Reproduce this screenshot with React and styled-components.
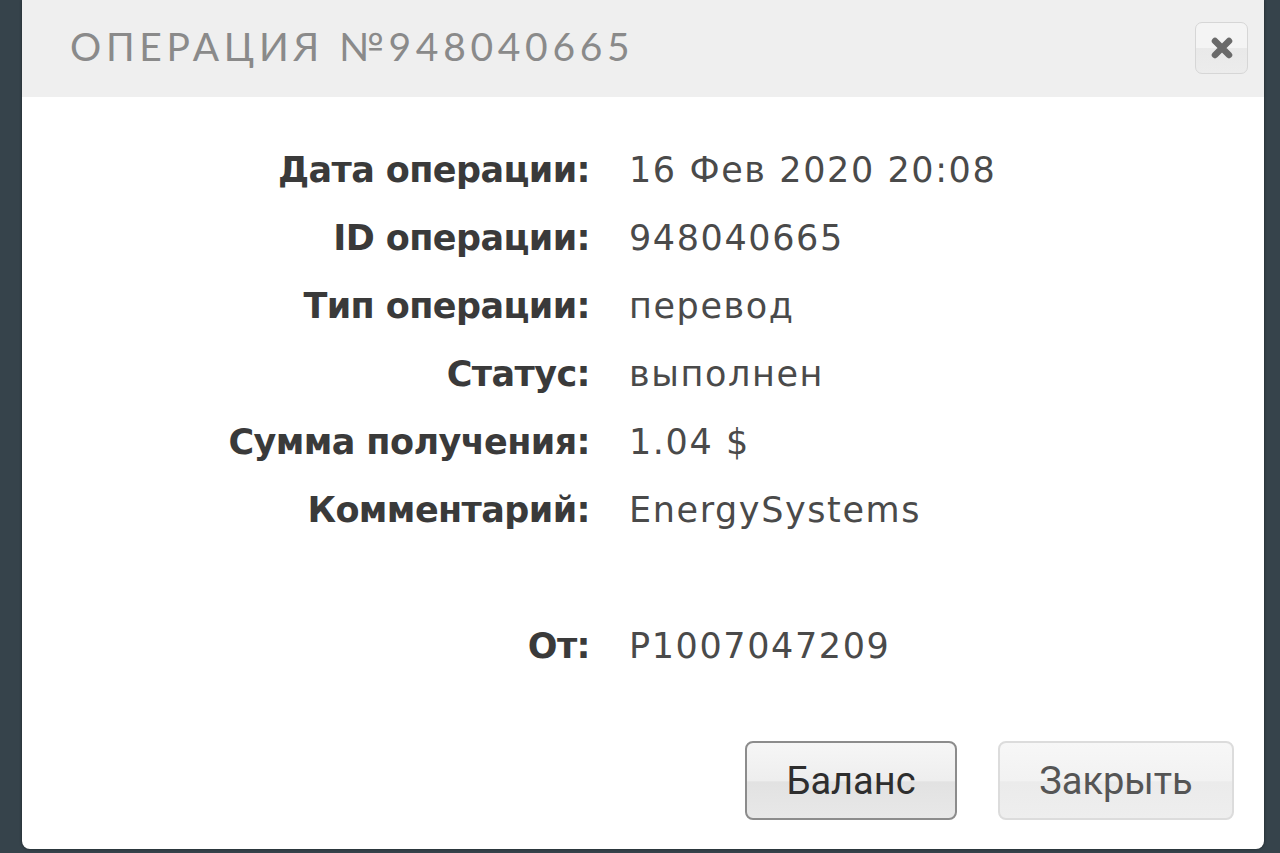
import React from "react";
import styled, { createGlobalStyle } from "styled-components";

const Global = createGlobalStyle`
  html, body { margin: 0; padding: 0; background: #36434b; }
  body { width: 1280px; height: 853px; overflow: hidden; }
`;

const Page = styled.div`
  width: 1280px;
  height: 853px;
  padding: 0 16px 0 22px;
  box-sizing: border-box;
  background: #36434b;
`;

const Dialog = styled.div`
  width: 1242px;
  height: 849px;
  background: #ffffff;
  border-radius: 0 0 8px 8px;
  box-shadow: 0 0 3px rgba(0, 0, 0, 0.5);
  display: flex;
  flex-direction: column;
  overflow: hidden;
`;

const Header = styled.div`
  height: 97px;
  background: #efefef;
  display: flex;
  align-items: center;
  justify-content: space-between;
  padding: 0 16px 0 48px;
  box-sizing: border-box;
  flex-shrink: 0;
`;

const Title = styled.h1`
  margin: 0 0 6px 0;
  font-family: "Lato", "DejaVu Sans", sans-serif;
  font-weight: 400;
  font-size: 39px;
  letter-spacing: 4.7px;
  color: #8a8a8a;
  text-transform: uppercase;
`;

const CloseBtn = styled.button`
  width: 53px;
  height: 52px;
  margin-bottom: 2px;
  border: 1px solid #d6d6d6;
  border-radius: 7px;
  background: linear-gradient(#f4f4f4 0%, #f4f4f4 50%, #e9e9e9 50%, #ececec 100%);
  display: flex;
  align-items: center;
  justify-content: center;
  padding: 0;
`;

const Body = styled.div`
  flex: 1;
  display: flex;
  flex-direction: column;
  padding: 39px 30px 29px 0;
`;

const Grid = styled.div`
  display: grid;
  grid-template-columns: 568px auto;
  column-gap: 39px;
  grid-auto-rows: 68px;
  align-items: center;
  font-family: "DejaVu Sans", "Noto Sans", sans-serif;
  font-size: 35px;
`;

const Label = styled.div`
  text-align: right;
  font-weight: 600;
  color: #3a3a3a;
  letter-spacing: -0.6px;
`;

const Value = styled.div`
  font-weight: 400;
  color: #4a4a4a;
  letter-spacing: 1.6px;
`;

const Spacer = styled.div`
  grid-column: 1 / span 2;
`;

const Actions = styled.div`
  margin-top: auto;
  display: flex;
  justify-content: flex-end;
  gap: 41px;
`;

const Button = styled.button`
  height: 79px;
  width: ${(p) => p.$w}px;
  box-sizing: border-box;
  border-radius: 8px;
  font-family: "Roboto", "Noto Sans", sans-serif;
  font-size: 38px;
  padding: 0;
  color: ${(p) => (p.$primary ? "#2e2e2e" : "#555")};
  border: ${(p) => (p.$primary ? "2px solid #8c8c8c" : "2px solid #dcdcdc")};
  background: ${(p) =>
    p.$primary
      ? "linear-gradient(#f6f6f6 0%, #eeeeee 50%, #e2e2e2 52%, #e8e8e8 100%)"
      : "linear-gradient(#f7f7f7 0%, #f2f2f2 50%, #ebebeb 52%, #eeeeee 100%)"};
`;

const rows = [
  ["Дата операции:", "16 Фев 2020 20:08"],
  ["ID операции:", "948040665"],
  ["Тип операции:", "перевод"],
  ["Статус:", "выполнен"],
  ["Сумма получения:", "1.04 $"],
  ["Комментарий:", "EnergySystems"],
];

export default function App() {
  return (
    <>
      <Global />
      <Page>
        <Dialog>
          <Header>
            <Title>Операция №948040665</Title>
            <CloseBtn aria-label="close">
              <svg width="26" height="26" viewBox="0 0 26 26">
                <path
                  d="M6 6 L20 20 M20 6 L6 20"
                  stroke="#6a6a6a"
                  strokeWidth="6.5"
                  strokeLinecap="round"
                />
              </svg>
            </CloseBtn>
          </Header>
          <Body>
            <Grid>
              {rows.map(([l, v]) => (
                <React.Fragment key={l}>
                  <Label>{l}</Label>
                  <Value>{v}</Value>
                </React.Fragment>
              ))}
              <Spacer />
              <Label>От:</Label>
              <Value>P1007047209</Value>
            </Grid>
            <Actions>
              <Button $primary $w={212}>Баланс</Button>
              <Button $w={236}>Закрыть</Button>
            </Actions>
          </Body>
        </Dialog>
      </Page>
    </>
  );
}
